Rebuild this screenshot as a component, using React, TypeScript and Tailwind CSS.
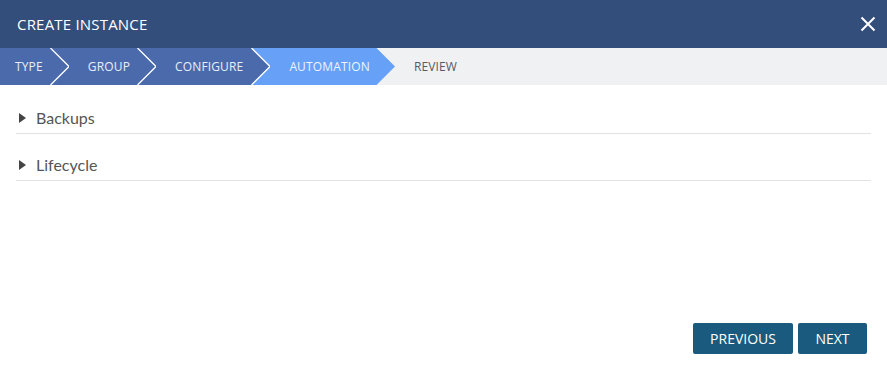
import React from "react";

const DARK = "#4a6aab";
const ACTIVE = "#66a0f7";
const GRAY = "#f0f1f3";

function Chevron({ left, right, line = true }: { left: string; right: string; line?: boolean }) {
  return (
    <svg width="19" height="37" viewBox="0 0 19 37" className="block shrink-0">
      <rect x="0" y="0" width="19" height="37" fill={right} />
      <polygon points="0,0 0.5,0 19,18.5 0.5,37 0,37" fill={left} />
      {line && <polyline points="0.5,0 19,18.5 0.5,37" fill="none" stroke="#ffffff" strokeWidth="1.3" />}
    </svg>
  );
}

export default function App() {
  const ff = { fontFamily: '"Open Sans", "Noto Sans", sans-serif' };
  return (
    <div className="w-[887px] h-[373px] flex flex-col bg-white overflow-hidden" style={ff}>
      <div className="h-[48px] bg-[#344e7b] flex items-center justify-between pl-[17px] pr-[10px]">
        <span className="text-white text-[15px] tracking-[0.2px]">CREATE INSTANCE</span>
        <svg width="16" height="16" viewBox="0 0 16 16" className="mr-[1px]">
          <path d="M1.5 1.5 L14.5 14.5 M14.5 1.5 L1.5 14.5" stroke="#ffffff" strokeWidth="2" />
        </svg>
      </div>
      <div className="h-[37px] flex items-stretch text-[12px] tracking-[0.15px] bg-[#f0f1f3]">
        <div className="flex items-center bg-[#4a6aab] text-[#e8eefa] pl-[15px] pr-[7px]">TYPE</div>
        <Chevron left={DARK} right={DARK} />
        <div className="flex items-center bg-[#4a6aab] text-[#e8eefa] pl-[19px] pr-[7px]">GROUP</div>
        <Chevron left={DARK} right={DARK} />
        <div className="flex items-center bg-[#4a6aab] text-[#e8eefa] pl-[19px] pr-[8px]">CONFIGURE</div>
        <Chevron left={DARK} right={ACTIVE} />
        <div className="flex items-center bg-[#66a0f7] text-[#eef3fd] pl-[19px] pr-[6px]">AUTOMATION</div>
        <Chevron left={ACTIVE} right={GRAY} line={false} />
        <div className="flex items-center text-[#555b66] pl-[19px]">REVIEW</div>
      </div>
      <div className="flex-1 flex flex-col px-[16px]" style={{ fontFamily: 'Lato, "Open Sans", sans-serif' }}>
        {["Backups", "Lifecycle"].map((t, i) => (
          <div key={t} className={`h-[31px] flex items-center border-b border-[#e3e3e3] ${i === 0 ? "mt-[18px]" : "mt-[16px]"}`}>
            <svg width="8" height="10" viewBox="0 0 8 10" className="ml-[3px] mr-[9px]">
              <polygon points="0,0 7,5 0,10" fill="#444" />
            </svg>
            <span className="text-[16px] text-[#555]">{t}</span>
          </div>
        ))}
      </div>
      <div className="flex justify-end gap-[5px] pr-[20px] pb-[19px]">
        <button className="w-[100px] h-[31px] rounded-[2px] bg-[#1a5a7e] text-white text-[14px]">PREVIOUS</button>
        <button className="w-[69px] h-[31px] rounded-[2px] bg-[#1a5a7e] text-white text-[14px]">NEXT</button>
      </div>
    </div>
  );
}
